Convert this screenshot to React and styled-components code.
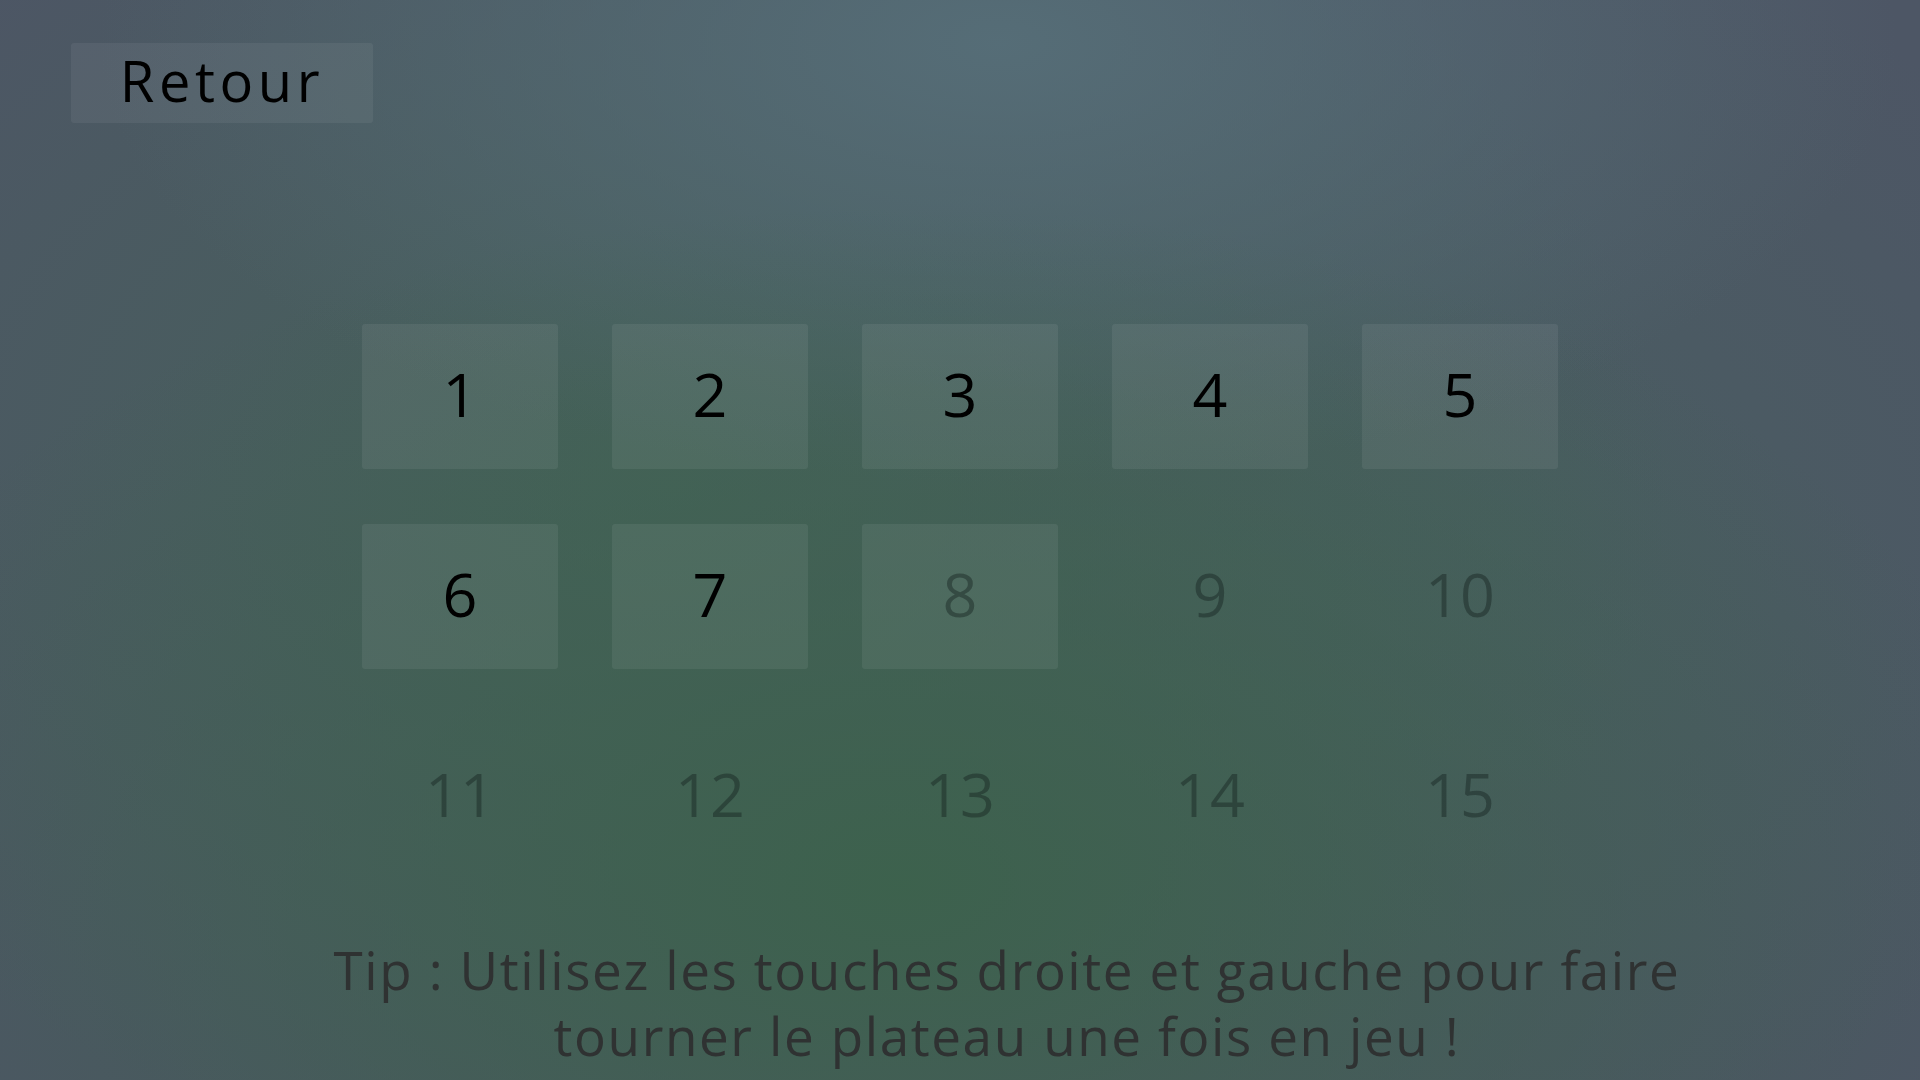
import React from "react";
import styled, { createGlobalStyle } from "styled-components";

const GlobalStyle = createGlobalStyle`
  html, body {
    margin: 0;
    padding: 0;
    overflow: hidden;
  }

  body {
    font-family: "Open Sans", "Liberation Sans", sans-serif;
  }
`;

const Screen = styled.div`
  width: 1920px;
  height: 1080px;
  display: flex;
  flex-direction: column;
  background:
    radial-gradient(ellipse 1150px 680px at 47% 82%, rgba(60, 98, 76, 0.95), rgba(60, 98, 76, 0) 100%),
    radial-gradient(ellipse 900px 440px at 52% 4%, rgba(86, 110, 120, 0.95), rgba(86, 110, 120, 0) 100%),
    radial-gradient(ellipse 1000px 700px at 35% 45%, rgba(68, 100, 88, 0.85), rgba(68, 100, 88, 0) 100%),
    radial-gradient(ellipse 700px 600px at 78% 50%, rgba(72, 96, 96, 0.7), rgba(72, 96, 96, 0) 100%),
    #4d5665;
`;

const Header = styled.div`
  padding: 43px 0 0 71px;
`;

const BackButton = styled.button`
  width: 302px;
  height: 80px;
  border: none;
  border-radius: 3px;
  background: rgba(255, 255, 255, 0.06);
  color: #000;
  font-family: inherit;
  font-size: 56px;
  letter-spacing: 4.6px;
  line-height: 74px;
  padding: 0 0 6px;
  cursor: pointer;
`;

const Grid = styled.div`
  margin: 201px auto 0;
  display: grid;
  grid-template-columns: repeat(5, 196px);
  grid-auto-rows: 145px;
  column-gap: 54px;
  row-gap: 55px;
`;

const Level = styled.div`
  display: flex;
  align-items: center;
  justify-content: center;
  padding-bottom: 7px;
  border-radius: 3px;
  font-size: 61px;
  background: ${(p) => (p.$shown ? "rgba(255, 255, 255, 0.065)" : "transparent")};
  color: ${(p) => (p.$unlocked ? "#000" : "rgba(20, 32, 28, 0.42)")};
`;

const Tip = styled.p`
  margin: 68px 0 0;
  padding-left: 94px;
  text-align: center;
  font-size: 53px;
  line-height: 66px;
  letter-spacing: 1.6px;
  color: #2f3232;
`;

const levels = Array.from({ length: 15 }, (_, i) => i + 1);

export default function App() {
  return (
    <>
      <GlobalStyle />
      <Screen>
        <Header>
          <BackButton>Retour</BackButton>
        </Header>
        <Grid>
          {levels.map((n) => (
            <Level key={n} $shown={n <= 8} $unlocked={n <= 7}>
              {n}
            </Level>
          ))}
        </Grid>
        <Tip>
          Tip : Utilisez les touches droite et gauche pour faire
          <br />
          tourner le plateau une fois en jeu !
        </Tip>
      </Screen>
    </>
  );
}
